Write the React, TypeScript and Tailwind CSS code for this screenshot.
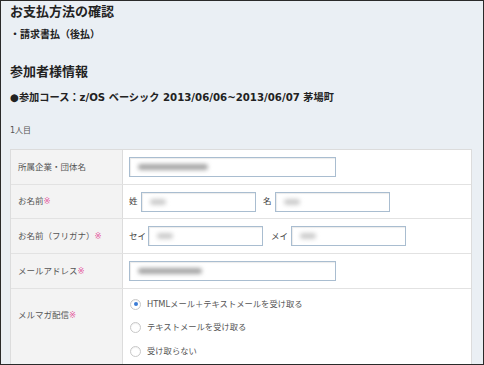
import React from "react";

const font = { fontFamily: '"DejaVu Sans", "Noto Sans CJK JP", sans-serif' };

const Blur = ({ w, dark }: { w: string; dark?: boolean }) => (
  <span
    className={`block h-[6px] ${w} rounded-sm blur-[2px] ${
      dark ? "bg-[#a5a5a5]" : "bg-[#cccccc]"
    }`}
  />
);

const Field = ({
  width,
  children,
}: {
  width: string;
  children?: React.ReactNode;
}) => (
  <div
    className={`${width} h-[20px] flex items-center pl-[8px] bg-white border border-[#a9bdd0] shadow-[inset_1px_1px_1px_rgba(0,0,0,0.08)]`}
  >
    {children}
  </div>
);

const Req = () => <span className="text-[#e45a9f]">※</span>;

const Label = ({ children, top }: { children: React.ReactNode; top?: boolean }) => (
  <div
    className={`w-[112px] shrink-0 bg-[#f3f3f3] border-r border-[#dcdcdc] pl-[7px] text-[8.5px] text-[#555] flex ${
      top ? "items-start pt-[20px]" : "items-center"
    }`}
  >
    <span>{children}</span>
  </div>
);

const Radio = ({ checked, label }: { checked?: boolean; label: string }) => (
  <div className="flex items-center gap-[6px]">
    <span className="w-[11px] h-[11px] rounded-full border border-[#c8c8c8] bg-white flex items-center justify-center shadow-[inset_0_1px_1px_rgba(0,0,0,0.06)]">
      {checked && <span className="w-[4px] h-[4px] rounded-full bg-[#3a7bd5]" />}
    </span>
    <span className="text-[8.3px] text-[#555]">{label}</span>
  </div>
);

export default function App() {
  return (
    <div
      className="w-[484px] h-[365px] overflow-hidden border border-[#2a2a2a] bg-[#eaeff4] px-[9px] pt-[3px]"
      style={font}
    >
      <h1 className="text-[13px] font-bold leading-[16px] text-[#222]">お支払方法の確認</h1>
      <p className="mt-[8px] text-[10px] font-bold leading-[14px] text-[#222]">・請求書払（後払）</p>
      <h2 className="mt-[22px] text-[13px] font-bold leading-[16px] text-[#222]">参加者様情報</h2>
      <p className="mt-[11px] text-[10.2px] font-bold leading-[14px] text-[#222] whitespace-nowrap">
        ●参加コース：z/OS ベーシック 2013/06/06~2013/06/07 茅場町
      </p>
      <p className="mt-[20px] text-[8px] leading-[12px] text-[#555]">1人目</p>

      <div className="mt-[12px] w-[462px] border border-[#dcdcdc] bg-white">
        <div className="flex h-[35px] border-b border-[#e2e2e2]">
          <Label>所属企業・団体名</Label>
          <div className="flex items-center pl-[6px]">
            <Field width="w-[207px]">
              <Blur w="w-[70px]" dark />
            </Field>
          </div>
        </div>

        <div className="flex h-[34px] border-b border-[#e2e2e2]">
          <Label>
            お名前<Req />
          </Label>
          <div className="flex items-center pl-[6px] text-[8.5px] text-[#444]">
            <span className="w-[12px]">姓</span>
            <Field width="w-[115px]">
              <Blur w="w-[16px]" />
            </Field>
            <span className="ml-[7px] w-[12px]">名</span>
            <Field width="w-[115px]">
              <Blur w="w-[16px]" />
            </Field>
          </div>
        </div>

        <div className="flex h-[35px] border-b border-[#e2e2e2]">
          <Label>
            お名前（フリガナ）<Req />
          </Label>
          <div className="flex items-center pl-[6px] text-[8.5px] text-[#444]">
            <span className="w-[19px]">セイ</span>
            <Field width="w-[115px]">
              <Blur w="w-[16px]" />
            </Field>
            <span className="ml-[8px] w-[20px]">メイ</span>
            <Field width="w-[115px]">
              <Blur w="w-[16px]" />
            </Field>
          </div>
        </div>

        <div className="flex h-[35px] border-b border-[#e2e2e2]">
          <Label>
            メールアドレス<Req />
          </Label>
          <div className="flex items-center pl-[6px]">
            <Field width="w-[207px]">
              <Blur w="w-[64px]" dark />
            </Field>
          </div>
        </div>

        <div className="flex h-[90px]">
          <Label top>
            メルマガ配信<Req />
          </Label>
          <div className="flex flex-col pl-[7px] pt-[9px] gap-[11px]">
            <Radio checked label="HTMLメール＋テキストメールを受け取る" />
            <Radio label="テキストメールを受け取る" />
            <Radio label="受け取らない" />
          </div>
        </div>
      </div>
    </div>
  );
}
